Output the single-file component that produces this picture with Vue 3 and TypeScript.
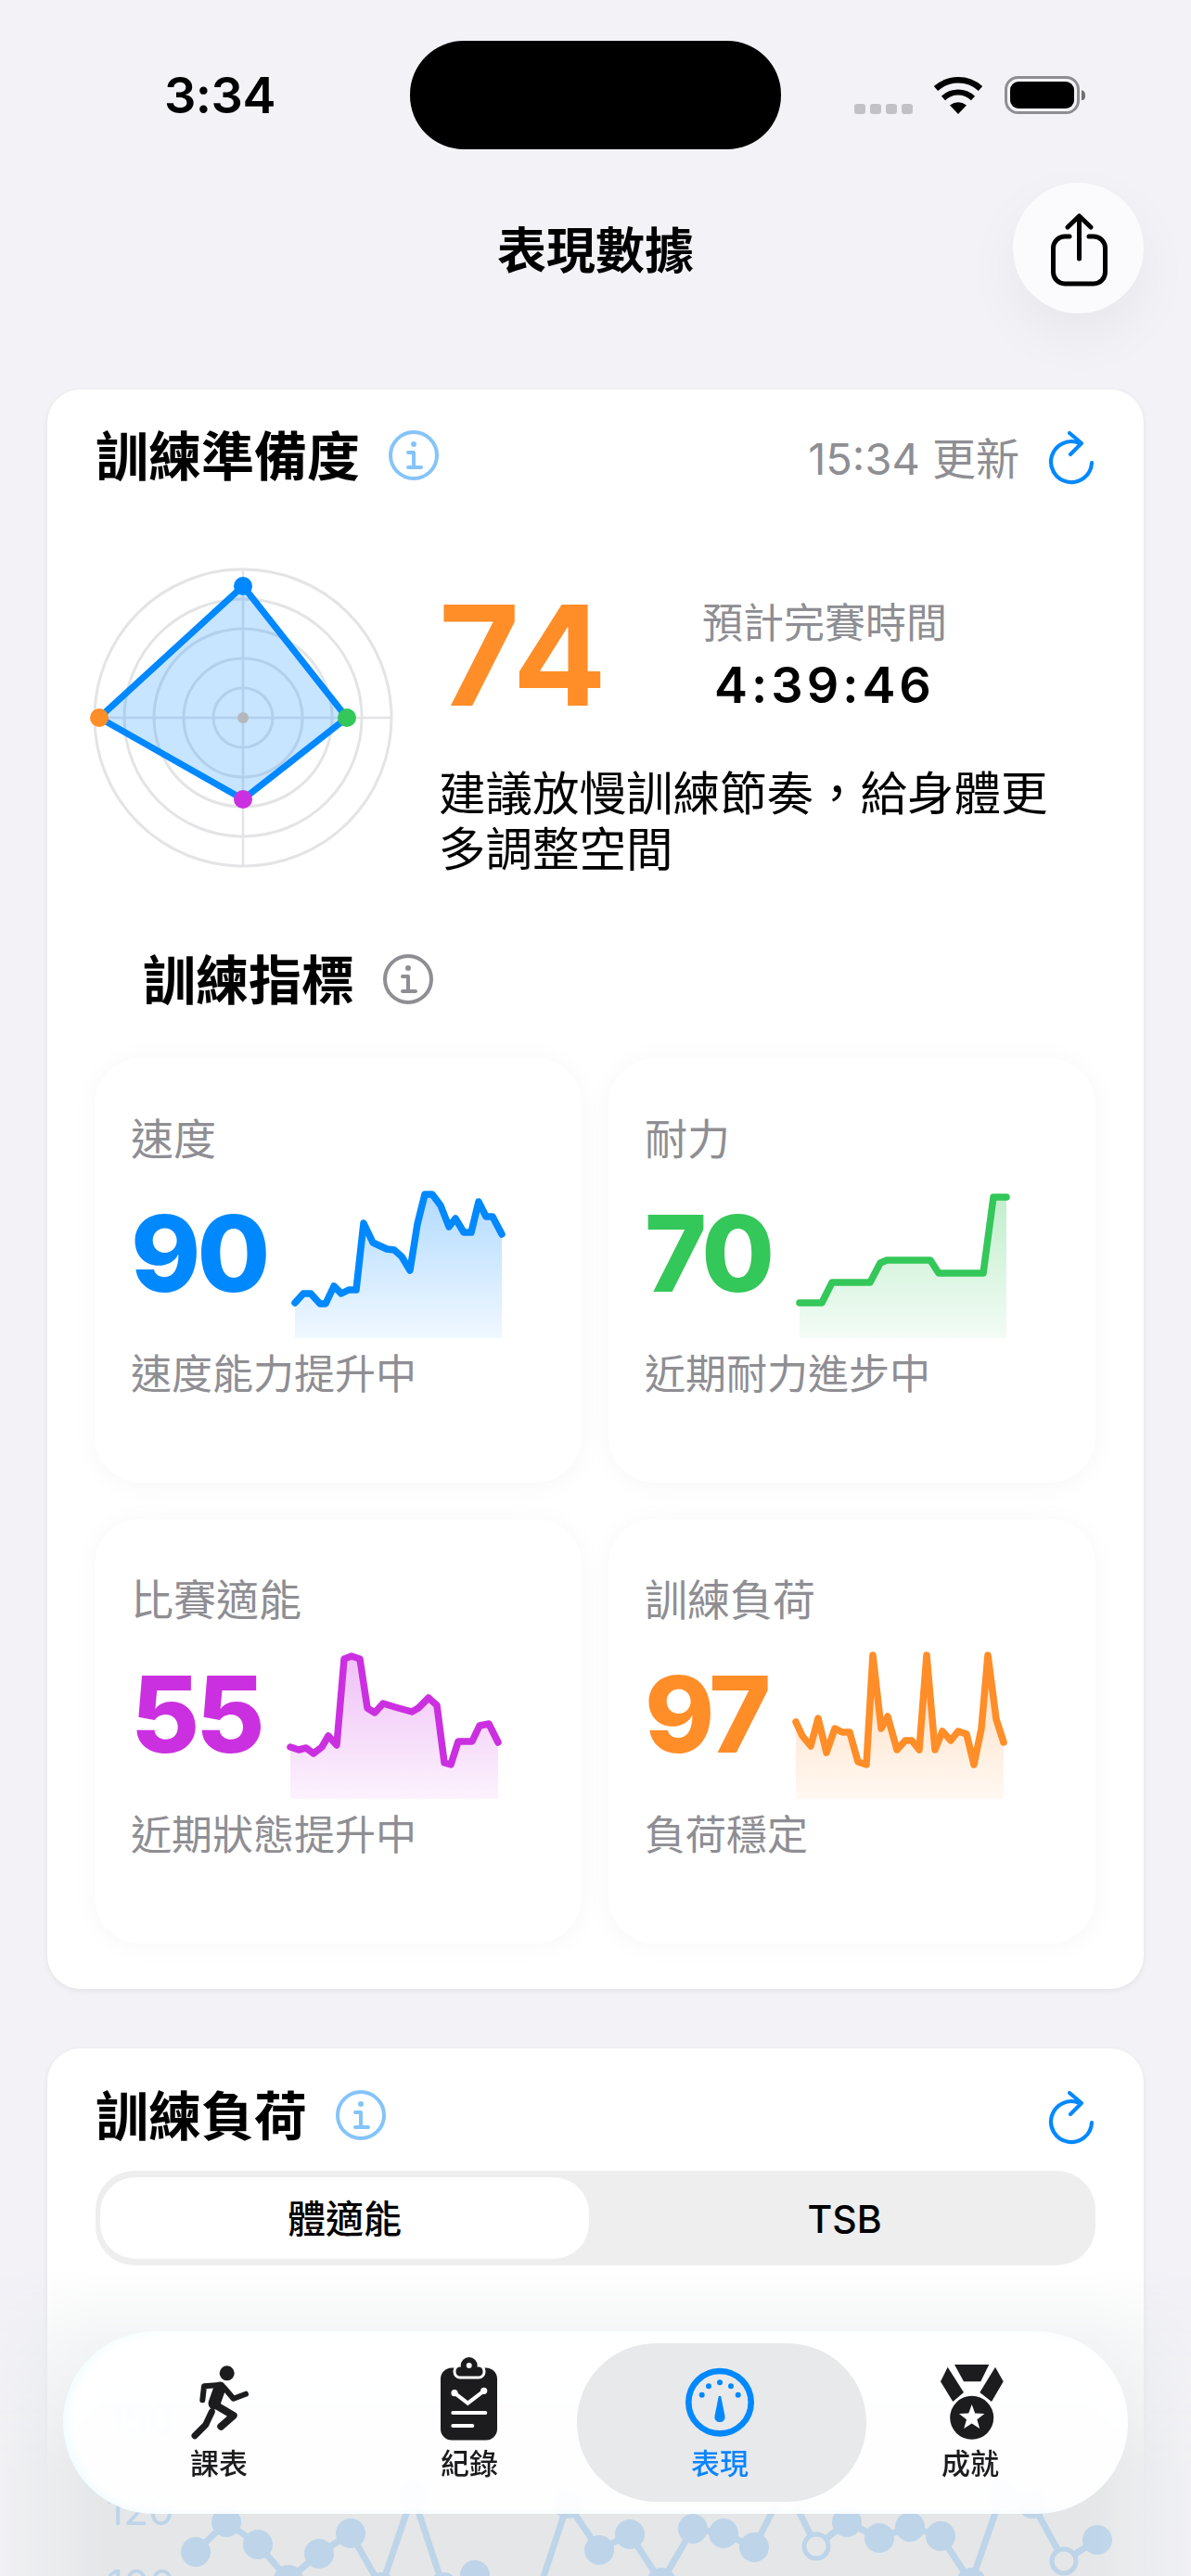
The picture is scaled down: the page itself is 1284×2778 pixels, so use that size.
<template>
  <div class="screen">
    <div class="status">
      <div class="clock">3:34</div>
      <div class="island"></div>
      <div class="status-right">
        <div class="signal"><i></i><i></i><i></i><i></i></div>
        <svg class="wifi" width="54" height="40" viewBox="0 0 54 40">
          <path d="M3 12.5A36 36 0 0 1 51 12.5" fill="none" stroke="#000" stroke-width="6.5" />
          <path d="M11 23A23 23 0 0 1 43 23" fill="none" stroke="#000" stroke-width="6" />
          <path d="M18 30.5Q27 24 36 30.5L27 40Z" fill="#000" />
        </svg>
        <svg class="battery" width="88" height="42" viewBox="0 0 88 42">
          <rect x="1.5" y="1.5" width="78" height="38" rx="13" fill="none" stroke="#8e8e93" stroke-width="3" />
          <rect x="6" y="6" width="69" height="29" rx="9" fill="#000" />
          <path d="M83 15C86 16 87 18 87 21S86 26 83 26Z" fill="#6f6f73" />
        </svg>
      </div>
    </div>

    <div class="nav">
      <div class="nav-title">表現數據</div>
      <button class="share">
        <svg width="70" height="90" viewBox="0 0 70 90" fill="none" stroke="#000" stroke-width="5" stroke-linecap="round" stroke-linejoin="round">
          <path d="M25 30H20A12.5 12.5 0 0 0 7.5 42.5V68.5A12.5 12.5 0 0 0 20 81H51A12.5 12.5 0 0 0 63.5 68.5V42.5A12.5 12.5 0 0 0 51 30H46" />
          <path d="M35.5 54V9M23 20L35.5 8L48 20" />
        </svg>
      </button>
    </div>

    <section class="card">
      <div class="card-head">
        <h2>訓練準備度</h2>
        <svg class="info" width="56" height="56" viewBox="0 0 56 56" fill="none" stroke="#85c4fa" stroke-width="4">
          <circle cx="28" cy="28" r="25" />
          <circle cx="28" cy="16" r="3" fill="#85c4fa" stroke="none" />
          <path d="M22 25H28V41M22 41H36" stroke-linecap="round" stroke-linejoin="round" />
        </svg>
        <span class="updated">15:34 更新</span>
        <svg class="refresh" width="52" height="62" viewBox="0 0 52 62" fill="none" stroke="#0088ff" stroke-width="4.2" stroke-linecap="round" stroke-linejoin="round">
          <path d="M48 36A22 22 0 1 1 35 15" />
          <path d="M24 4L37 15L25 27" />
        </svg>
      </div>

      <div class="readiness">
        <svg class="radar" width="340" height="340" viewBox="0 0 340 340">
          <circle v-for="r in rings" :key="r" cx="170" cy="170" :r="r" fill="none" stroke="#e4e4e6" stroke-width="3" />
          <path d="M170 10V330M10 170H330" stroke="#e4e4e6" stroke-width="2.5" />
          <polygon :points="radarPolygon" fill="rgba(0,136,255,0.22)" stroke="#0088ff" stroke-width="7" stroke-linejoin="round" />
          <circle cx="170" cy="170" r="6" fill="#b4b8bd" />
          <circle v-for="d in radarDots" :key="d.color" :cx="d.x" :cy="d.y" r="10" :fill="d.color" />
        </svg>
        <div class="readiness-text">
          <div class="score-row">
            <div class="score">74</div>
            <div class="finish">
              <div class="finish-label">預計完賽時間</div>
              <div class="finish-time">4:39:46</div>
            </div>
          </div>
          <p class="advice">建議放慢訓練節奏，給身體更多調整空間</p>
        </div>
      </div>

      <div class="sub-head">
        <h2>訓練指標</h2>
        <svg class="info" width="56" height="56" viewBox="0 0 56 56" fill="none" stroke="#8e8e93" stroke-width="4">
          <circle cx="28" cy="28" r="25" />
          <circle cx="28" cy="16" r="3" fill="#8e8e93" stroke="none" />
          <path d="M22 25H28V41M22 41H36" stroke-linecap="round" stroke-linejoin="round" />
        </svg>
      </div>

      <div class="metrics">
        <div v-for="m in metrics" :key="m.label" class="metric">
          <div class="metric-label">{{ m.label }}</div>
          <div class="metric-row">
            <div class="metric-value" :style="{ color: m.color }">{{ m.value }}</div>
            <svg class="spark" width="224" height="156" viewBox="0 0 224 156">
              <defs>
                <linearGradient :id="m.id" x1="0" y1="0" x2="0" y2="1">
                  <stop offset="0" :stop-color="m.color" stop-opacity="0.3" />
                  <stop offset="1" :stop-color="m.color" stop-opacity="0.06" />
                </linearGradient>
              </defs>
              <path :d="areaPath(m.points)" :fill="`url(#${m.id})`" />
              <polyline :points="linePoints(m.points)" fill="none" :stroke="m.color" stroke-width="7.5" stroke-linecap="round" stroke-linejoin="round" />
            </svg>
          </div>
          <div class="metric-note">{{ m.note }}</div>
        </div>
      </div>
    </section>

    <section class="card card-load">
      <div class="card-head card-head-load">
        <h2>訓練負荷</h2>
        <svg class="info" width="56" height="56" viewBox="0 0 56 56" fill="none" stroke="#85c4fa" stroke-width="4">
          <circle cx="28" cy="28" r="25" />
          <circle cx="28" cy="16" r="3" fill="#85c4fa" stroke="none" />
          <path d="M22 25H28V41M22 41H36" stroke-linecap="round" stroke-linejoin="round" />
        </svg>
        <span class="spacer"></span>
        <svg class="refresh" width="52" height="62" viewBox="0 0 52 62" fill="none" stroke="#0088ff" stroke-width="4.2" stroke-linecap="round" stroke-linejoin="round">
          <path d="M48 36A22 22 0 1 1 35 15" />
          <path d="M24 4L37 15L25 27" />
        </svg>
      </div>
      <div class="toggle">
        <div class="toggle-item selected">體適能</div>
        <div class="toggle-item other">TSB</div>
      </div>
      <svg class="load-chart" width="1182" height="400" viewBox="0 0 1182 400">
        <text v-for="t in chartLabels" :key="t.text" x="64" :y="t.y" class="axis-text">{{ t.text }}</text>
        <polyline :points="chartLine" fill="none" stroke="#0088ff" stroke-width="7" stroke-linejoin="round" />
        <template v-for="p in chartPoints" :key="p.x">
          <circle v-if="p.hollow" :cx="p.x" :cy="p.y" r="13" fill="#fff" stroke="#0088ff" stroke-width="5" />
          <circle v-else :cx="p.x" :cy="p.y" r="16" fill="#0088ff" />
        </template>
      </svg>
    </section>

    <div class="fade"></div>

    <nav class="tabbar">
      <div class="tab">
        <svg width="90" height="90" viewBox="0 0 90 90" fill="none" stroke="#1c1c1e" stroke-linecap="round" stroke-linejoin="round">
          <circle cx="53.7" cy="17.3" r="8" fill="#1c1c1e" stroke="none" />
          <path d="M45.7 30L29 31.3L27.3 46.3" stroke-width="6" />
          <path d="M46 33L40 50" stroke-width="13" />
          <path d="M50.7 33L60.7 44.7L74 39.7" stroke-width="6" />
          <path d="M37.3 59L30.7 73L19 84.7" stroke-width="7" />
          <path d="M42 52L60.7 63L47.3 74.7" stroke-width="8" />
        </svg>
        <span>課表</span>
      </div>
      <div class="tab">
        <svg width="90" height="90" viewBox="0 0 90 90">
          <rect x="14" y="11.5" width="61" height="78" rx="12" fill="#1c1c1e" />
          <rect x="29" y="9" width="32" height="13" rx="6" fill="#1c1c1e" stroke="#fff" stroke-width="3" />
          <circle cx="44.7" cy="9" r="9" fill="#1c1c1e" />
          <circle cx="44.7" cy="9" r="3" fill="#fff" />
          <g stroke="#fff" stroke-width="4" stroke-linecap="round" fill="none">
            <path d="M29 38.7L43.3 49.7L60.7 36.3" />
            <path d="M27.3 60H62.3M27.3 74H48.3" />
          </g>
          <circle cx="29" cy="38.7" r="3.6" fill="#fff" />
          <circle cx="60.7" cy="36.3" r="3.6" fill="#fff" />
        </svg>
        <span>紀錄</span>
      </div>
      <div class="tab active">
        <svg width="90" height="90" viewBox="0 0 90 90">
          <circle cx="45" cy="48.7" r="33.7" fill="none" stroke="#0088ff" stroke-width="6.6" />
          <g fill="#0088ff">
            <circle cx="25.7" cy="40.7" r="3" />
            <circle cx="33" cy="31.3" r="3" />
            <circle cx="45" cy="27.3" r="3" />
            <circle cx="57" cy="31.3" r="3" />
            <circle cx="64.7" cy="40.7" r="3" />
            <path d="M43.8 42H46.2L50.4 63A5.6 5.6 0 1 1 39.6 63Z" />
          </g>
        </svg>
        <span>表現</span>
      </div>
      <div class="tab">
        <svg width="90" height="90" viewBox="0 0 90 90" fill="#1c1c1e">
          <path d="M28 8H65.3L56.3 26.3H38Z" />
          <path d="M20.7 10.7L13 26.3L26.3 48L38 38Z" />
          <path d="M72 10.7L80.7 26.3L68 48L55.3 38Z" />
          <circle cx="46.7" cy="65.3" r="23.5" />
          <polygon points="46.7,51 50.2,60.6 60.4,61 52.4,67.3 55.2,77.1 46.7,71.4 38.2,77.1 41,67.3 33,61 43.2,60.6" fill="#fff" />
        </svg>
        <span>成就</span>
      </div>
    </nav>
  </div>
</template>

<script setup lang="ts">
type Pt = [number, number]

const rings = [160, 128, 96, 64, 32]

const radarDots = [
  { x: 170, y: 28, color: '#0088ff' },
  { x: 282, y: 170, color: '#34c759' },
  { x: 170, y: 258, color: '#cb30e0' },
  { x: 15, y: 170, color: '#ff8d28' },
]
const radarPolygon = radarDots.map((d) => `${d.x},${d.y}`).join(' ')

const metrics: { id: string; label: string; value: number; note: string; color: string; points: Pt[] }[] = [
  {
    id: 'spark-speed', label: '速度', value: 90, note: '速度能力提升中', color: '#0088ff',
    points: [[0, 118], [9, 108], [17, 108], [27, 119], [33, 119], [42, 100], [50, 108], [58, 104], [66, 104], [74, 32], [84, 53], [99, 60], [107, 61], [115, 68], [124, 83], [132, 33], [140, 1], [148, 1], [157, 13], [166, 36], [173, 27], [182, 42], [190, 42], [198, 9], [206, 25], [213, 25], [223, 44]],
  },
  {
    id: 'spark-endurance', label: '耐力', value: 70, note: '近期耐力進步中', color: '#34c759',
    points: [[0, 118], [24, 118], [35, 96], [76, 96], [87, 75], [94, 72], [141, 72], [150, 86], [198, 86], [209, 4], [223, 4]],
  },
  {
    id: 'spark-race', label: '比賽適能', value: 55, note: '近期狀態提升中', color: '#cb30e0',
    points: [[0, 100], [9, 103], [17, 101], [25, 107], [34, 100], [41, 88], [50, 98], [58, 5], [66, 2], [75, 5], [83, 58], [91, 63], [100, 53], [113, 57], [131, 62], [138, 58], [149, 47], [158, 55], [166, 117], [173, 119], [181, 94], [196, 94], [204, 77], [214, 75], [224, 95]],
  },
  {
    id: 'spark-load', label: '訓練負荷', value: 97, note: '負荷穩定', color: '#ff8d28',
    points: [[0, 73], [7, 88], [16, 99], [24, 69], [33, 106], [42, 80], [50, 84], [58, 84], [67, 116], [76, 119], [83, 1], [92, 80], [99, 67], [109, 103], [118, 93], [125, 93], [133, 103], [141, 1], [150, 103], [158, 83], [167, 93], [175, 83], [184, 86], [192, 119], [200, 80], [207, 1], [216, 70], [224, 95]],
  },
]

const linePoints = (pts: Pt[]) => pts.map((p) => p.join(',')).join(' ')
const areaPath = (pts: Pt[]) =>
  `M${pts[0][0]} 156L${pts.map((p) => p.join(' ')).join('L')}L${pts[pts.length - 1][0]} 156Z`

const chartLabels = [
  { text: '150', y: 182 },
  { text: '120', y: 280 },
  { text: '100', y: 360 },
]

const chartRaw: [number, number, boolean?][] = [
  [160, 309], [193, 277], [227, 301], [260, 339], [293, 311], [327, 289], [360, 347], [394, 247],
  [427, 347], [461, 334], [494, 357], [528, 357], [561, 257], [595, 307], [628, 290], [662, 342],
  [696, 284], [729, 289], [762, 304], [796, 237], [829, 303, true], [862, 277], [897, 294], [930, 282],
  [963, 292], [996, 342], [1029, 247], [1062, 257], [1096, 319, true], [1132, 296],
]
const chartPoints = chartRaw.map(([x, y, hollow]) => ({ x, y, hollow: !!hollow }))
const chartLine = chartRaw.map(([x, y]) => `${x},${y}`).join(' ')
</script>

<style scoped>
.screen {
  position: relative;
  width: 1284px;
  height: 2778px;
  overflow: hidden;
  background: #f2f2f7;
  color: #000;
  font-family: Inter, "Noto Sans CJK TC", sans-serif;
}

.status {
  display: flex;
  height: 117px;
  padding-top: 44px;
}
.clock {
  width: 442px;
  padding-left: 177px;
  box-sizing: border-box;
  font-size: 54px;
  font-weight: 600;
  letter-spacing: -0.5px;
  line-height: 117px;
}
.island {
  width: 400px;
  height: 117px;
  border-radius: 58px;
  background: #000;
}
.status-right {
  display: flex;
  align-items: center;
  padding-left: 79px;
}
.signal {
  display: flex;
  gap: 5px;
  margin-top: 29px;
}
.signal i {
  width: 12px;
  height: 11px;
  border-radius: 3px;
  background: #c2c2c6;
}
.wifi {
  margin-left: 22px;
}
.battery {
  margin-left: 23px;
}

.nav {
  position: relative;
  height: 140px;
  margin-top: 36px;
}
.nav-title {
  padding-top: 4px;
  font-size: 53px;
  font-weight: 600;
  line-height: 140px;
  text-align: center;
}
.share {
  position: absolute;
  top: 0;
  left: 1092px;
  display: flex;
  align-items: center;
  justify-content: center;
  width: 141px;
  height: 141px;
  padding: 5px 0 0;
  border: none;
  border-radius: 50%;
  background: #fbfbfd;
  box-shadow: 0 24px 60px rgba(0, 0, 0, 0.05);
}

.card {
  width: 1182px;
  margin: 83px 0 0 51px;
  padding-bottom: 49px;
  border-radius: 36px;
  background: #fff;
  box-shadow: 0 2px 6px rgba(0, 0, 0, 0.07);
}
.card-load {
  margin-top: 64px;
  padding-bottom: 0;
}
h2 {
  margin: 0;
  padding-bottom: 6px;
  font-size: 57px;
  font-weight: 600;
}
.card-head {
  display: flex;
  align-items: center;
  height: 142px;
  padding: 0 52px;
}
.card-head-load {
  box-sizing: border-box;
  height: 132px;
  padding-top: 12px;
}
.card-head .info {
  margin-left: 30px;
}
.updated {
  margin-left: auto;
  color: #8e8e93;
  font-size: 47px;
}
.spacer {
  flex: 1;
}
.refresh {
  margin-top: 5px;
  margin-left: 30px;
}

.readiness {
  display: flex;
  gap: 41px;
  padding: 42px 0 0 41px;
}
.radar {
  flex: none;
}
.readiness-text {
  padding-top: 29px;
}
.score-row {
  display: flex;
}
.score {
  width: 282px;
  color: #ff8d28;
  font-size: 150px;
  font-weight: 700;
  letter-spacing: 1px;
  line-height: 148px;
}
.finish {
  width: 268px;
  margin-top: 14px;
  text-align: center;
}
.finish-label {
  color: #8e8e93;
  font-size: 44px;
  line-height: 50px;
  white-space: nowrap;
}
.finish-time {
  margin-top: 12px;
  font-size: 54px;
  font-weight: 600;
  letter-spacing: 4px;
  line-height: 60px;
}
.advice {
  width: 665px;
  margin: 45px 0 0;
  font-size: 50.5px;
  line-height: 60px;
}

.sub-head {
  display: flex;
  align-items: center;
  height: 70px;
  margin-top: 75px;
  padding-left: 103px;
}
.sub-head .info {
  margin-left: 30px;
}

.metrics {
  display: grid;
  grid-template-columns: 525px 525px;
  grid-auto-rows: 458px;
  gap: 39px 29px;
  margin: 50px 0 0 51px;
}
.metric {
  padding: 59px 0 0 39px;
  border-radius: 50px;
  background: #fff;
  box-shadow: 0 2px 30px rgba(0, 0, 0, 0.035);
}
.metric-label,
.metric-note {
  color: #8e8e93;
  line-height: 56px;
}
.metric-label {
  font-size: 46px;
}
.metric-note {
  margin-top: 11px;
  font-size: 44px;
}
.metric-row {
  display: flex;
  gap: 31px;
  margin-top: 31px;
}
.metric-value {
  font-size: 114px;
  font-weight: 800;
  letter-spacing: -4px;
  line-height: 129px;
}
.spark {
  flex: none;
  overflow: visible;
}

.toggle {
  display: flex;
  box-sizing: border-box;
  width: 1078px;
  height: 102px;
  margin-left: 52px;
  padding: 7px 5px;
  border-radius: 42px;
  background: #eeeeef;
}
.toggle-item {
  flex: 1;
  font-size: 41px;
  font-weight: 500;
  line-height: 90px;
  text-align: center;
}
.toggle-item.selected {
  flex: none;
  width: 527px;
  border-radius: 38px;
  background: #fff;
}
.toggle-item.other {
  padding-left: 10px;
}
.load-chart {
  display: block;
}
.axis-text {
  fill: #0088ff;
  font-size: 44px;
}

.fade {
  position: absolute;
  top: 2446px;
  left: 0;
  width: 1284px;
  height: 332px;
  background: linear-gradient(to right, #f1f1f4, #dfe2e4 110px, #dfe2e4 1174px, #f1f1f4);
  -webkit-mask-image: linear-gradient(to bottom, transparent, rgba(0, 0, 0, 0.35) 22%, rgba(0, 0, 0, 0.85) 65%);
  mask-image: linear-gradient(to bottom, transparent, rgba(0, 0, 0, 0.35) 22%, rgba(0, 0, 0, 0.85) 65%);
}

.tabbar {
  position: absolute;
  top: 2514px;
  left: 68px;
  display: flex;
  box-sizing: border-box;
  width: 1148px;
  height: 197px;
  padding: 0 33px;
  border-radius: 98px;
  background: rgba(255, 255, 255, 0.95);
  backdrop-filter: blur(2px);
  box-shadow: inset 5px 0 10px rgba(170, 235, 255, 0.16);
}
.tab {
  position: relative;
  display: flex;
  flex: 0 0 270px;
  flex-direction: column;
  align-items: center;
  padding-top: 28px;
  color: #1c1c1e;
  font-size: 31px;
  font-weight: 500;
  line-height: 40px;
}
.tab svg,
.tab span {
  position: relative;
  z-index: 1;
}
.tab span {
  margin-top: 5px;
}
.tab.active {
  color: #0a84ff;
}
.tab.active::before {
  content: "";
  position: absolute;
  top: 13px;
  left: -19px;
  width: 312px;
  height: 171px;
  border-radius: 85px;
  background: #e8e9ea;
}
</style>

<style>
html,
body {
  margin: 0;
  background: #f2f2f7;
}
</style>
